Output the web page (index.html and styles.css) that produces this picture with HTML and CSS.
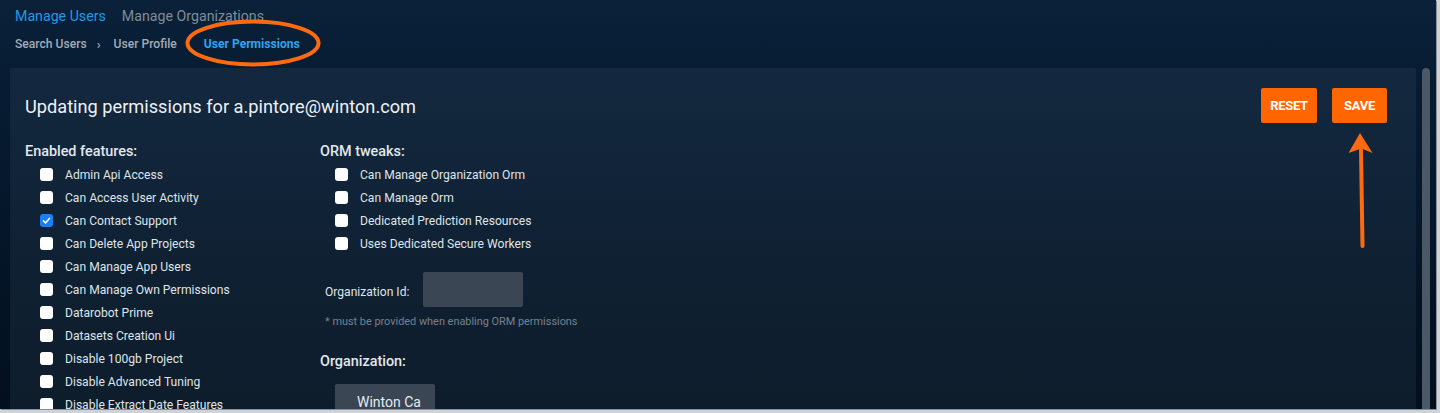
FILE: index.html
```html
<!DOCTYPE html>
<html>
<head>
<meta charset="utf-8">
<link rel="stylesheet" href="styles.css">
</head>
<body>
<div class="app">
  <nav class="tabs">
    <span class="tab active">Manage Users</span>
    <span class="tab">Manage Organizations</span>
  </nav>
  <div class="crumbs">
    <span class="crumb">Search Users</span>
    <span class="sep">›</span>
    <span class="crumb">User Profile</span>
    <span class="crumb current">User Permissions</span>
  </div>
  <main class="main">
    <section class="panel">
      <div class="panel-head">
        <h1 class="title">Updating permissions for a.pintore@winton.com</h1>
        <div class="actions">
          <button class="btn">RESET</button>
          <button class="btn">SAVE</button>
        </div>
      </div>
      <div class="cols">
        <div class="col col-left">
          <h2 class="heading">Enabled features:</h2>
          <ul class="checks">
            <li class="check"><span class="box"></span>Admin Api Access</li>
            <li class="check"><span class="box"></span>Can Access User Activity</li>
            <li class="check"><span class="box on"><svg viewBox="0 0 13 13" width="13" height="13"><path d="M3.4 6.8 L5.5 8.9 L9.6 4.2" fill="none" stroke="#fff" stroke-width="1.5" stroke-linecap="round" stroke-linejoin="round"/></svg></span>Can Contact Support</li>
            <li class="check"><span class="box"></span>Can Delete App Projects</li>
            <li class="check"><span class="box"></span>Can Manage App Users</li>
            <li class="check"><span class="box"></span>Can Manage Own Permissions</li>
            <li class="check"><span class="box"></span>Datarobot Prime</li>
            <li class="check"><span class="box"></span>Datasets Creation Ui</li>
            <li class="check"><span class="box"></span>Disable 100gb Project</li>
            <li class="check"><span class="box"></span>Disable Advanced Tuning</li>
            <li class="check"><span class="box"></span>Disable Extract Date Features</li>
          </ul>
        </div>
        <div class="col col-right">
          <h2 class="heading">ORM tweaks:</h2>
          <ul class="checks">
            <li class="check"><span class="box"></span>Can Manage Organization Orm</li>
            <li class="check"><span class="box"></span>Can Manage Orm</li>
            <li class="check"><span class="box"></span>Dedicated Prediction Resources</li>
            <li class="check"><span class="box"></span>Uses Dedicated Secure Workers</li>
          </ul>
          <div class="field">
            <label class="field-label">Organization Id:</label>
            <span class="input"></span>
          </div>
          <p class="note">* must be provided when enabling ORM permissions</p>
          <h2 class="heading org-heading">Organization:</h2>
          <div class="org-box">Winton Ca</div>
        </div>
      </div>
    </section>
    <div class="scrollbar"></div>
  </main>

  <svg class="ring" width="140" height="50" viewBox="0 0 140 50">
    <ellipse cx="70" cy="25" rx="65.5" ry="21.5" fill="none" stroke="#ff6a10" stroke-width="4"/>
  </svg>
  <svg class="arrow" width="30" height="120" viewBox="0 0 30 120">
    <path d="M15 18 L16.5 114" stroke="#ff6a10" stroke-width="4" stroke-linecap="round" fill="none"/>
    <path d="M14 1 L26.5 21 L15.5 16.5 L2.5 21 Z" fill="#ff6a10"/>
  </svg>
</div>
</body>
</html>
```

FILE: styles.css
```css
* { box-sizing: border-box; }
html, body { margin: 0; padding: 0; }
body {
  width: 1440px;
  height: 413px;
  overflow: hidden;
  background: #cfd3d7;
  font-family: Roboto, "Liberation Sans", Arial, sans-serif;
}
.app {
  position: relative;
  width: 1436px;
  height: 409px;
  overflow: hidden;
  background: linear-gradient(180deg, #0a2139 0%, #061a30 30%, #020f1d 100%);
  box-shadow: 1px 1px 0 #8a9096;
  display: flex;
  flex-direction: column;
  padding-top: 6px;
}
.tabs {
  display: flex;
  gap: 16px;
  padding-left: 15px;
  height: 20px;
  align-items: center;
}
.tab {
  font-size: 14.2px;
  color: #7f8c99;
  line-height: 20px;
}
.tab.active { color: #1e9be2; }
.crumbs {
  margin-top: 10px;
  height: 16px;
  display: flex;
  align-items: center;
  padding-left: 15px;
  font-size: 12.1px;
  font-weight: 500;
  color: #a3acb6;
}
.sep { margin: 0 13px 0 10px; font-size: 13px; color: #a3acb6; }
.crumb.current { color: #2ea3ee; margin-left: 27px; font-weight: 700; }
.main {
  margin-top: 16px;
  flex: 1;
  display: flex;
  gap: 6px;
  padding: 0 6px 0 10px;
  min-height: 0;
}
.panel {
  flex: 1;
  background: linear-gradient(180deg, #13283f 0%, #0f2032 60%, #0e1d2b 100%);
  border-radius: 2px 2px 0 0;
  padding: 20px 29px 0 15px;
  overflow: hidden;
}
.scrollbar {
  width: 8px;
  background: #4b5866;
  border-radius: 4px 4px 0 0;
}
.panel-head {
  display: flex;
  align-items: center;
  justify-content: space-between;
  height: 35px;
}
.title {
  margin: 0;
  font-size: 18.2px;
  font-weight: 400;
  color: #eef1f4;
  line-height: 24px;
  padding-top: 2px;
}
.actions { display: flex; gap: 15px; }
.btn {
  height: 35px;
  border: 0;
  border-radius: 2px;
  background: #ff6600;
  color: #fff;
  font-family: Roboto, "Liberation Sans", Arial, sans-serif;
  font-weight: 700;
  font-size: 13px;
  letter-spacing: -0.3px;
  padding: 0;
}
.actions .btn:first-child { width: 56px; }
.actions .btn:last-child { width: 55px; }
.cols {
  display: flex;
  margin-top: 19px;
}
.col-left { width: 295px; }
.col-right { flex: 1; }
.heading {
  margin: 0 0 1px;
  font-size: 14.4px;
  font-weight: 500;
  line-height: 20px;
  color: #e3e7eb;
}
.checks {
  list-style: none;
  margin: 0;
  padding: 0 0 0 15px;
}
.check {
  height: 23px;
  display: flex;
  align-items: center;
  font-size: 12.1px;
  color: #dfe4e8;
}
.box {
  width: 13px;
  height: 13px;
  border-radius: 3px;
  background: #ffffff;
  margin-right: 12px;
  flex: none;
  display: flex;
}
.box.on { background: #1a7ff5; }
.field {
  display: flex;
  align-items: center;
  margin-top: 17px;
  padding-left: 5px;
}
.field-label {
  width: 98px;
  font-size: 12.1px;
  color: #dfe4e8;
  padding-top: 4px;
}
.input {
  width: 100px;
  height: 35px;
  background: #3a4653;
  border-radius: 2px;
}
.note {
  margin: 8px 0 0 5px;
  font-size: 10.9px;
  line-height: 14px;
  color: #76818d;
}
.org-heading { margin-top: 23px; }
.org-box {
  margin: 12px 0 0 15px;
  width: 100px;
  height: 36px;
  background: #3a4653;
  border-radius: 2px;
  color: #e6eaee;
  font-size: 14px;
  line-height: 36px;
  padding-left: 22px;
}
.ring {
  position: absolute;
  left: 183px;
  top: 18px;
}
.arrow {
  position: absolute;
  left: 1346px;
  top: 132px;
}
```
